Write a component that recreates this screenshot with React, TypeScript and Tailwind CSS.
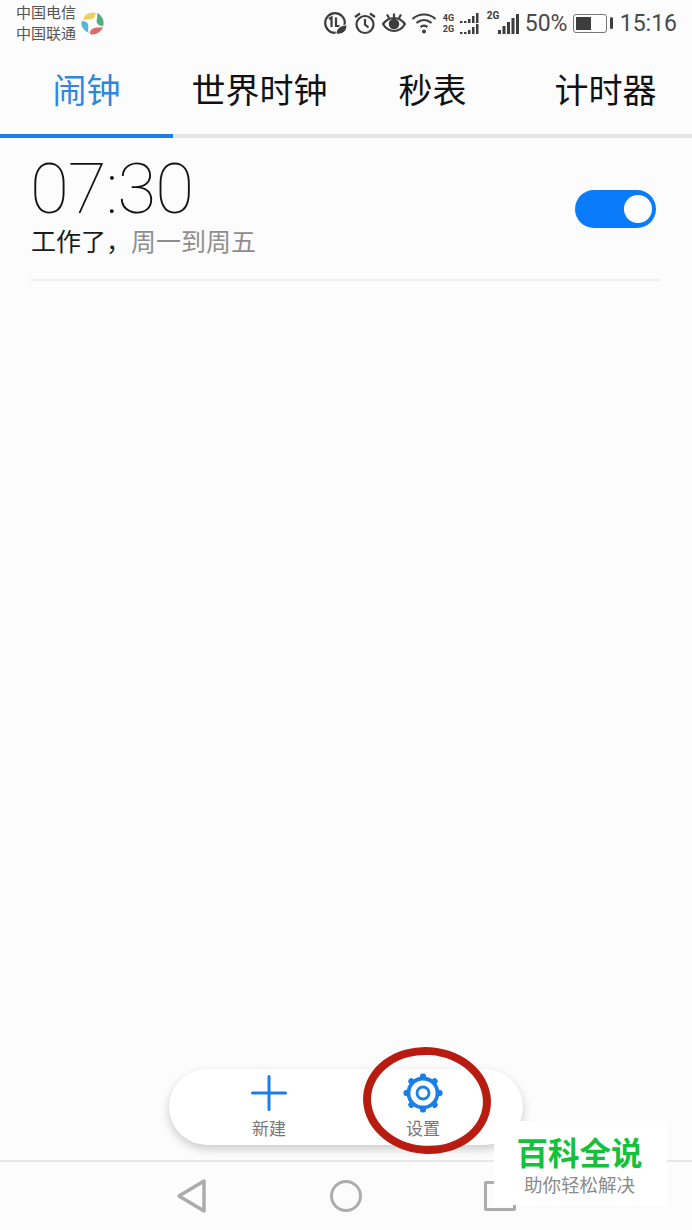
const CJK = { fontFamily: 'Roboto, "Noto Sans CJK SC", sans-serif' };

function LogoRing() {
  return (
    <svg width="24" height="24" viewBox="0 0 24 24" className="shrink-0">
      <path d="M3 9C4 3 11 0 16 2c-1 4-2 5-4 6-3 1-6 0-9 1z" fill="#ecd35c" />
      <path d="M17 2c5 2 8 8 6 13-3 0-5-1-6-3-1-3 1-6 0-10z" fill="#4faf7c" />
      <path d="M23 16c-2 5-8 9-13 7 0-4 2-5 4-6 3-1 6 0 9-1z" fill="#dc6a6a" />
      <path d="M9 22C3 19 0 14 2 10c3 0 5 1 6 3 1 3-1 5 1 9z" fill="#57b5dc" />
    </svg>
  );
}

function DataSaver() {
  return (
    <svg width="24" height="24" viewBox="0 0 24 24" className="shrink-0">
      <circle cx="12" cy="12" r="9.800" fill="none" stroke="#3d3d3d" strokeWidth="2.200" />
      <path d="M6 8l2.500-1.500V16M13 6.500V15h3.500" fill="none" stroke="#3d3d3d" strokeWidth="2.200" />
      <path d="M13 23c0-5 4-9 11-9 0 6-4 10-11 9z" fill="#3d3d3d" stroke="#fcfcfc" strokeWidth="1" />
    </svg>
  );
}

function Alarm() {
  return (
    <svg width="24" height="24" viewBox="0 0 24 24" fill="none" stroke="#3d3d3d" strokeWidth="2.200" className="shrink-0">
      <circle cx="12" cy="13.500" r="8.500" />
      <path d="M12 8v5.500l3.500 3M2 6l5-3.500M22 6 17 2.500" />
    </svg>
  );
}

function Eye() {
  return (
    <svg width="24" height="24" viewBox="0 0 24 24" fill="none" stroke="#3d3d3d" strokeWidth="2.200" className="shrink-0">
      <path d="M1 13c3-4 7-6 11-6s8 2 11 6c-3 5-7 7-11 7s-8-2-11-7z" />
      <circle cx="12" cy="13" r="4.200" fill="#3d3d3d" />
      <path d="M12 6V2.500M7 7 5 3.500M17 7l2-3.500" />
    </svg>
  );
}

function Wifi() {
  return (
    <svg width="26" height="22" viewBox="0 0 26 22" fill="none" stroke="#3d3d3d" strokeWidth="2.200" className="shrink-0">
      <path d="M1.500 7c6.500-6 16.500-6 23 0M5.500 11c4.500-4 10.500-4 15 0M9.500 15c2-1.500 5-1.500 7 0" />
      <circle cx="13" cy="19.500" r="2" fill="#3d3d3d" stroke="none" />
    </svg>
  );
}

function Bars({ heights, w = 3, gap = 2.5 }: { heights: number[]; w?: number; gap?: number }) {
  const max = Math.max(...heights);
  return (
    <svg width={heights.length * (w + gap)} height={max} className="shrink-0">
      {heights.map((h, i) => (
        <rect key={i} x={i * (w + gap)} y={max - h} width={w} height={h} fill="#3d3d3d" />
      ))}
    </svg>
  );
}

function DualSignal() {
  return (
    <div className="flex flex-col gap-[1px] shrink-0 w-[37px]">
      {['4G', '2G'].map((t) => (
        <div key={t} className="flex items-end justify-between">
          <span className="text-[9px] leading-[10px] font-bold text-[#3d3d3d] w-[14px]">{t}</span>
          <Bars heights={[2, 2, 4, 7, 10]} w={2.5} gap={1.5} />
        </div>
      ))}
    </div>
  );
}

function Battery() {
  return (
    <div className="flex items-center gap-[3px] shrink-0">
      <div className="w-[34px] h-[19px] border border-[#777] rounded-[3px] p-[2px] flex">
        <div className="w-[15px] bg-[#3d3d3d]" />
      </div>
      <div className="w-[3px] h-[12px] bg-[#3d3d3d] rounded-sm" />
    </div>
  );
}

function StatusBar() {
  return (
    <div className="h-[46px] shrink-0 pl-4 pr-[15px] flex items-center justify-between text-[#4a4a4a]">
      <div className="flex items-center gap-[4px]">
        <div className="text-[15px] leading-[21px] text-[#555] w-[60px] whitespace-nowrap pt-[2px]">
          <div>中国电信</div>
          <div>中国联通</div>
        </div>
        <LogoRing />
      </div>
      <div className="flex items-center">
        <DataSaver />
        <div className="w-[6px]" />
        <Alarm />
        <div className="w-[5px]" />
        <Eye />
        <div className="w-[5px]" />
        <Wifi />
        <div className="w-[6px]" />
        <DualSignal />
        <div className="w-[7px]" />
        <div className="relative flex items-end h-[22px] w-[34px]">
          <span className="absolute left-0 top-[-1px] text-[10px] leading-[10px] font-bold text-[#3d3d3d]">2G</span>
          <div className="ml-[11px]">
            <Bars heights={[4, 8, 12, 16, 20]} w={3} gap={1.5} />
          </div>
        </div>
        <span className="text-[23px] leading-none ml-[4px] w-[48px] whitespace-nowrap">50%</span>
        <Battery />
        <span className="text-[23px] leading-none ml-[7px]">15:16</span>
      </div>
    </div>
  );
}

function Tabs() {
  const tabs = ['闹钟', '世界时钟', '秒表', '计时器'];
  return (
    <div className="grid grid-cols-4 h-[92px] shrink-0 border-b-4 border-[#e4e4e4]">
      {tabs.map((t, i) => (
        <div
          key={t}
          className={
            i === 0
              ? 'relative flex items-center justify-center pt-[3px] text-[34px] text-[#2a88e0]'
              : 'relative flex items-center justify-center pt-[3px] text-[34px] text-[#111]'
          }
        >
          <span className="whitespace-nowrap">{t}</span>
          {i === 0 && <div className="absolute left-0 right-0 bottom-[-4px] h-[4px] bg-[#1a7fe8]" />}
        </div>
      ))}
    </div>
  );
}

function AlarmRow() {
  return (
    <div className="mx-[31px] h-[143px] border-b-2 border-[#eeeeee] flex items-start justify-between shrink-0">
      <div className="pt-[17px]">
        <div className="text-[71px] leading-[67px] text-[#111] tracking-[-1px] ml-[-1px]" style={{ fontFamily: 'Roboto, sans-serif', fontWeight: 100 }}>
          07:30
        </div>
        <div className="text-[25px] leading-[32px] mt-[5px] whitespace-nowrap">
          <span className="text-[#1a1a1a]">工作了，</span>
          <span className="text-[#8e8e8e]">周一到周五</span>
        </div>
      </div>
      <div className="mt-[52px] mr-[5px] w-[81px] h-[38px] rounded-full bg-[#0a7bfa] flex items-center justify-end pr-[4px]">
        <div className="w-[28px] h-[28px] rounded-full bg-white" />
      </div>
    </div>
  );
}

function GearIcon() {
  const teeth = [0, 45, 90, 135, 180, 225, 270, 315];
  return (
    <svg width="40" height="40" viewBox="0 0 40 40">
      {teeth.map((a) => (
        <rect key={a} x="17" y="0.500" width="6" height="6" rx="2.500" fill="#1a7fe8" transform={`rotate(${a} 20 20)`} />
      ))}
      <circle cx="20" cy="20" r="14.500" fill="none" stroke="#1a7fe8" strokeWidth="3.800" />
      <circle cx="20" cy="20" r="6" fill="none" stroke="#1a7fe8" strokeWidth="2.800" />
    </svg>
  );
}

function PlusIcon() {
  return (
    <svg width="36" height="36" viewBox="0 0 36 36" stroke="#1a7fe8" strokeWidth="3" strokeLinecap="round">
      <path d="M18 1.500v33M1.500 18h33" />
    </svg>
  );
}

function Pill() {
  return (
    <div className="relative w-[354px] h-[76px] mx-auto rounded-full bg-white shadow-[0_4px_10px_rgba(0,0,0,0.2)] grid grid-cols-[154px_154px] justify-center shrink-0">
      <div className="flex flex-col items-center pt-[6px]">
        <PlusIcon />
        <span className="text-[17px] leading-[22px] text-[#777] mt-[7px]">新建</span>
      </div>
      <div className="flex flex-col items-center pt-[4px]">
        <GearIcon />
        <span className="text-[17px] leading-[22px] text-[#777] mt-[5px]">设置</span>
      </div>
      <div className="absolute left-[194px] top-[-22px] w-[128px] h-[107px] rounded-[50%] border-[8px] border-[#b81c10] rotate-[4deg]" />
    </div>
  );
}

function NavBar() {
  return (
    <div className="h-[70px] border-t-2 border-[#e8e8e8] flex items-center justify-center gap-[122px] shrink-0">
      <svg width="32" height="36" viewBox="0 0 32 36" fill="none" stroke="#acacac" strokeWidth="3.500" strokeLinejoin="round">
        <path d="M28 3v30L3 18z" />
      </svg>
      <div className="w-[32px] h-[32px] rounded-full border-[3.500px] border-[#acacac]" />
      <div className="w-[32px] h-[30px] rounded-[2px] border-[3.500px] border-[#acacac]" />
    </div>
  );
}

export default function App() {
  return (
    <div className="relative w-[692px] h-[1230px] overflow-hidden bg-[#fcfcfc] flex flex-col" style={CJK}>
      <StatusBar />
      <Tabs />
      <AlarmRow />
      <div className="flex-1" />
      <Pill />
      <div className="h-[15px] shrink-0" />
      <NavBar />
      <div className="absolute left-[494px] top-[1121px] w-[173px] h-[84px] bg-white flex flex-col items-center pt-[15px] pr-[2px]">
        <span className="text-[31.500px] leading-[38px] font-bold text-[#14c13c] whitespace-nowrap">百科全说</span>
        <span className="text-[18.500px] leading-[24px] text-[#8b8b8b] whitespace-nowrap">助你轻松解决</span>
      </div>
    </div>
  );
}
